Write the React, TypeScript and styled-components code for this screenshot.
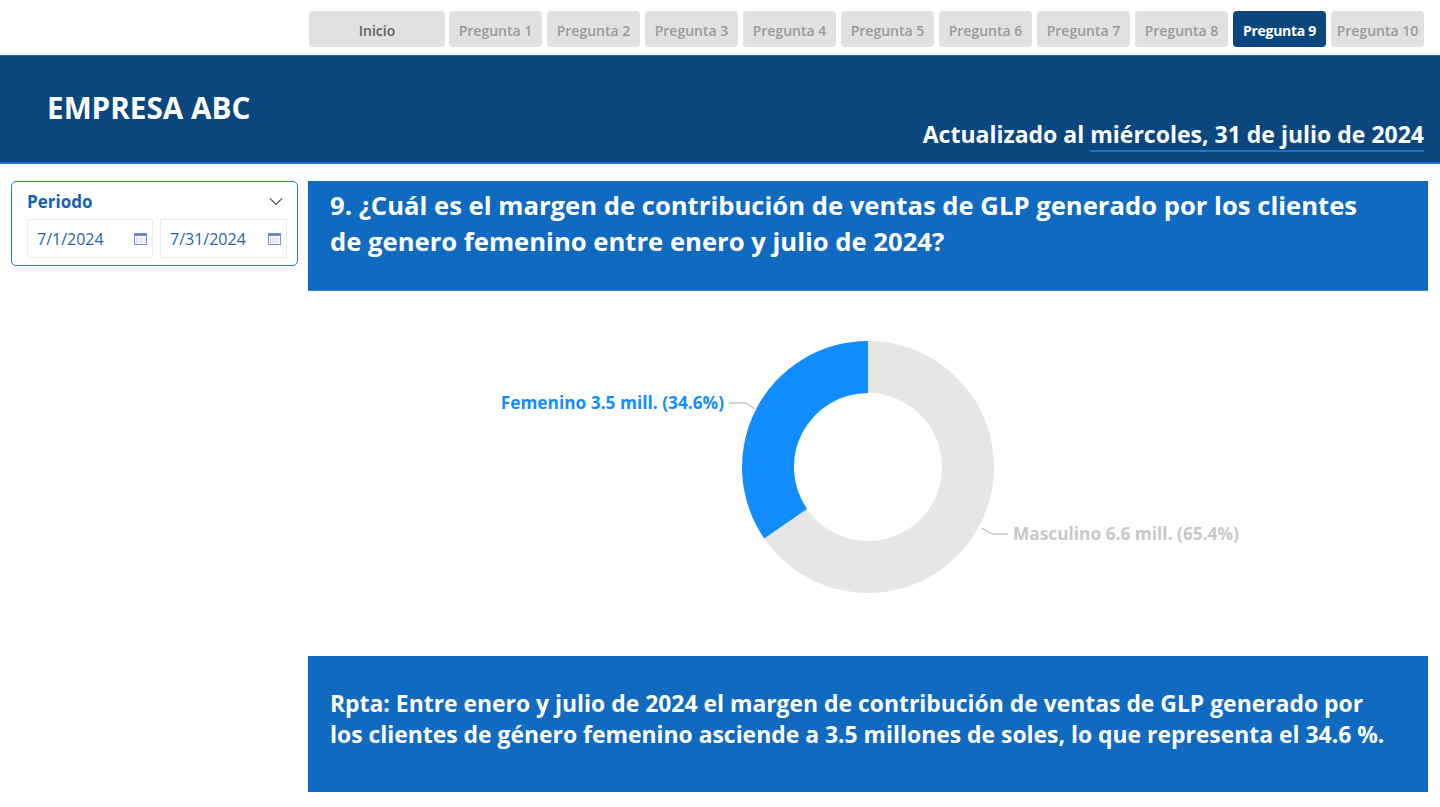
import React from "react";
import styled, { createGlobalStyle } from "styled-components";

const GlobalStyle = createGlobalStyle`
  html, body { margin: 0; padding: 0; background: #ffffff; }
  body { font-family: "Open Sans", "Noto Sans", "Liberation Sans", sans-serif; }
  * { box-sizing: border-box; }
`;

const Page = styled.div`
  width: 1440px;
  height: 807px;
  overflow: hidden;
  background: #ffffff;
`;

const NavBar = styled.nav`
  height: 55px;
  display: flex;
  justify-content: flex-end;
  align-items: flex-start;
  padding: 11px 16px 0 0;
  gap: 5px;
`;

const NavButton = styled.button<{ $active?: boolean; $home?: boolean }>`
  height: 36px;
  width: ${(p) => (p.$home ? "136px" : "93px")};
  margin-right: ${(p) => (p.$home ? "-1px" : "0")};
  border: none;
  border-radius: 4px;
  background: ${(p) => (p.$active ? "#0b467e" : "#e1e1e1")};
  color: ${(p) => (p.$active ? "#ffffff" : p.$home ? "#5f5f5f" : "#9a9a9a")};
  font-family: "Open Sans", "Noto Sans", sans-serif;
  font-size: 14px;
  font-weight: ${(p) => (p.$active ? 700 : 600)};
  letter-spacing: ${(p) => (p.$active ? "-0.3px" : "0")};
  padding: 2px 0 0 0;
  cursor: pointer;
`;

const Header = styled.header`
  height: 109px;
  background: #0b477f;
  border-top: 1px solid #1563ad;
  border-bottom: 2px solid #1a74cc;
  display: flex;
  justify-content: space-between;
  padding: 0 16px 0 47px;
`;

const Brand = styled.h1`
  margin: 0;
  padding-top: 32px;
  color: #ffffff;
  font-size: 29.7px;
  font-weight: 700;
  letter-spacing: 0;
  line-height: 40px;
`;

const Updated = styled.div`
  align-self: flex-end;
  padding-bottom: 13px;
  color: #ffffff;
  font-size: 23px;
  font-weight: 700;
  letter-spacing: 0;
  line-height: 30px;
  white-space: nowrap;
`;

const DateLink = styled.span`
  border-bottom: 2px solid #1d74cc;
  padding-bottom: 0;
`;

const Body = styled.div`
  display: grid;
  grid-template-columns: 308px 1120px;
  padding-top: 17px;
`;

const Sidebar = styled.aside`
  padding-left: 11px;
`;

const FilterCard = styled.div`
  width: 287px;
  height: 85px;
  border: 1px solid #2a78c8;
  border-radius: 5px;
  padding: 6px 10px 0 15px;
`;

const FilterHead = styled.div`
  display: flex;
  justify-content: space-between;
  align-items: center;
  height: 26px;
  padding-right: 4px;
`;

const FilterTitle = styled.span`
  color: #1462b3;
  font-size: 17px;
  font-weight: 700;
`;

const DateRow = styled.div`
  display: flex;
  gap: 7px;
  margin-top: 5px;
`;

const DateBox = styled.div<{ $w: number }>`
  width: ${(p) => p.$w}px;
  flex: none;
  height: 39px;
  border: 1px solid #ececec;
  display: flex;
  align-items: center;
  justify-content: space-between;
  padding: 0 5px 0 9px;
  color: #2663aa;
  font-size: 16px;
`;

const Main = styled.main`
  display: flex;
  flex-direction: column;
`;

const QuestionBox = styled.div`
  height: 110px;
  background: #0f6ac0;
  border-bottom: 1px solid #3b86cf;
  padding: 7px 22px 0 22px;
  color: #ffffff;
  font-size: 25.65px;
  font-weight: 700;
  line-height: 36px;
  letter-spacing: 0;
`;

const ChartArea = styled.div`
  height: 365px;
  position: relative;
`;

const ChartSvg = styled.svg`
  display: block;
`;

const AnswerBox = styled.div`
  height: 136px;
  background: #0f6ac0;
  padding: 32px 22px 0 22px;
  color: #ffffff;
  font-size: 22.9px;
  font-weight: 700;
  line-height: 31px;
  letter-spacing: 0;
`;

const LabelText = styled.text<{ $c: string }>`
  fill: ${(p) => p.$c};
  font-family: "Open Sans", "Noto Sans", sans-serif;
  font-size: 17.3px;
  font-weight: 700;
`;

const Chevron = () => (
  <svg width="14" height="9" viewBox="0 0 14 9">
    <path d="M1 1.5 L7 7.5 L13 1.5" fill="none" stroke="#555" strokeWidth="1.1" />
  </svg>
);

const CalIcon = () => (
  <svg width="13" height="12" viewBox="0 0 13 12">
    <rect x="0.5" y="0.5" width="12" height="11" fill="#ffffff" stroke="#7b8fc8" />
    <rect x="0.5" y="0.5" width="12" height="2.5" fill="#6f87c8" />
    {[2.5, 5, 7.5, 10].map((x) =>
      [5, 7, 9].map((y) => <rect key={`${x}-${y}`} x={x - 0.5} y={y - 0.5} width="1.2" height="1" fill="#a3aacd" />)
    )}
  </svg>
);

const tabs = ["Pregunta 1", "Pregunta 2", "Pregunta 3", "Pregunta 4", "Pregunta 5", "Pregunta 6", "Pregunta 7", "Pregunta 8", "Pregunta 9", "Pregunta 10"];

function arcPath(cx: number, cy: number, R: number, r: number, a0: number, a1: number) {
  const pt = (rad: number, a: number) => {
    const t = (a * Math.PI) / 180;
    return [cx + rad * Math.sin(t), cy - rad * Math.cos(t)];
  };
  const large = Math.abs(a1 - a0) > 180 ? 1 : 0;
  const [x0, y0] = pt(R, a0);
  const [x1, y1] = pt(R, a1);
  const [x2, y2] = pt(r, a1);
  const [x3, y3] = pt(r, a0);
  return `M${x0} ${y0} A${R} ${R} 0 ${large} 1 ${x1} ${y1} L${x2} ${y2} A${r} ${r} 0 ${large} 0 ${x3} ${y3} Z`;
}

const Donut = () => {
  const cx = 560;
  const cy = 176;
  const R = 126;
  const r = 74;
  const fem = 34.6 * 3.6;
  return (
    <ChartSvg width="1120" height="365" viewBox="0 0 1120 365">
      <path d={arcPath(cx, cy, R, r, 0, 360 - fem)} fill="#e6e6e6" />
      <path d={arcPath(cx, cy, R, r, 360 - fem, 360)} fill="#118dff" />
      <polyline points="421,112 438,112 447,118" fill="none" stroke="#a9a9a9" strokeWidth="1" />
      <LabelText $c="#118dff" x="416" y="113" textAnchor="end" dominantBaseline="middle">
        Femenino 3.5 mill. (34.6%)
      </LabelText>
      <polyline points="674,237 684,243 700,243" fill="none" stroke="#a9a9a9" strokeWidth="1" />
      <LabelText $c="#c8c8c8" x="705" y="244" dominantBaseline="middle">
        Masculino 6.6 mill. (65.4%)
      </LabelText>
    </ChartSvg>
  );
};

export default function App() {
  return (
    <Page>
      <GlobalStyle />
      <NavBar>
        <NavButton $home>Inicio</NavButton>
        {tabs.map((t) => (
          <NavButton key={t} $active={t === "Pregunta 9"}>
            {t}
          </NavButton>
        ))}
      </NavBar>
      <Header>
        <Brand>EMPRESA ABC</Brand>
        <Updated>
          Actualizado al <DateLink>miércoles, 31 de julio de 2024</DateLink>
        </Updated>
      </Header>
      <Body>
        <Sidebar>
          <FilterCard>
            <FilterHead>
              <FilterTitle>Periodo</FilterTitle>
              <Chevron />
            </FilterHead>
            <DateRow>
              <DateBox $w={126}>
                7/1/2024 <CalIcon />
              </DateBox>
              <DateBox $w={127}>
                7/31/2024 <CalIcon />
              </DateBox>
            </DateRow>
          </FilterCard>
        </Sidebar>
        <Main>
          <QuestionBox>
            9. ¿Cuál es el margen de contribución de ventas de GLP generado por los clientes
            <br />
            de genero femenino entre enero y julio de 2024?
          </QuestionBox>
          <ChartArea>
            <Donut />
          </ChartArea>
          <AnswerBox>
            Rpta: Entre enero y julio de 2024 el margen de contribución de ventas de GLP generado por
            <br />
            los clientes de género femenino asciende a 3.5 millones de soles, lo que representa el 34.6 %.
          </AnswerBox>
        </Main>
      </Body>
    </Page>
  );
}
